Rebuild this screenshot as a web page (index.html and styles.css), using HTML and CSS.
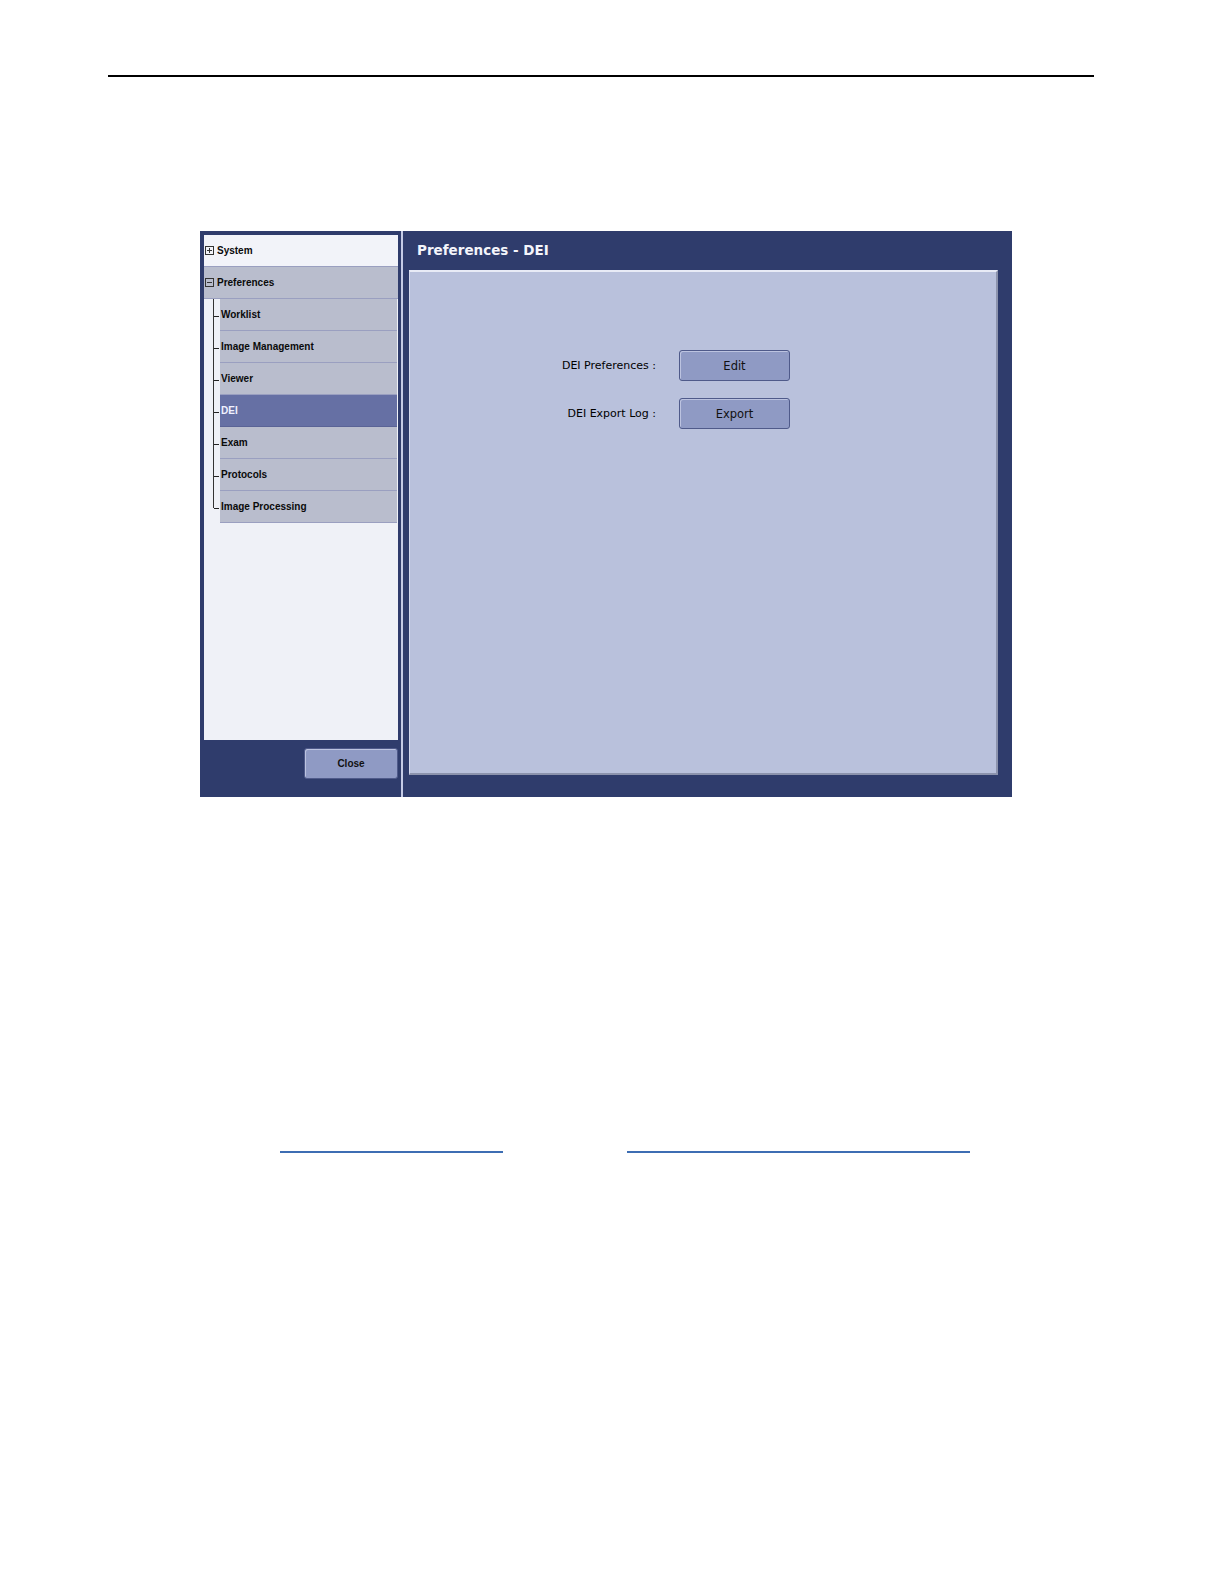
FILE: index.html
```html
<!DOCTYPE html>
<html>
<head>
<meta charset="utf-8">
<title>Preferences - DEI</title>
<link rel="stylesheet" href="styles.css">
</head>
<body>
<div class="page">
  <div class="rule"></div>
  <div class="shot">
    <div class="left">
      <div class="tree">
        <div class="row top first">
          <span class="box"><svg width="9" height="9" viewBox="0 0 9 9"><rect x="0.5" y="0.5" width="8" height="8" fill="none" stroke="#333" stroke-width="1"/><path d="M2 4.5H7M4.5 2V7" stroke="#333" stroke-width="1"/></svg></span>
          <span class="lbl">System</span>
        </div>
        <div class="row top">
          <span class="box"><svg width="9" height="9" viewBox="0 0 9 9"><rect x="0.5" y="0.5" width="8" height="8" fill="none" stroke="#333" stroke-width="1"/><path d="M2 4.5H7" stroke="#333" stroke-width="1"/></svg></span>
          <span class="lbl">Preferences</span>
        </div>
        <div class="children">
          <div class="child"><span class="tick"></span><span class="item">Worklist</span></div>
          <div class="child"><span class="tick"></span><span class="item">Image Management</span></div>
          <div class="child"><span class="tick"></span><span class="item">Viewer</span></div>
          <div class="child"><span class="tick"></span><span class="item sel">DEI</span></div>
          <div class="child"><span class="tick"></span><span class="item">Exam</span></div>
          <div class="child"><span class="tick"></span><span class="item">Protocols</span></div>
          <div class="child last"><span class="tick"></span><span class="item">Image Processing</span></div>
        </div>
      </div>
      <div class="foot">
        <button class="btn close">Close</button>
      </div>
    </div>
    <div class="sep"></div>
    <div class="right">
      <div class="title">Preferences - DEI</div>
      <div class="panel">
        <div class="form">
          <div class="frow"><span class="flabel">DEI Preferences :</span><button class="btn act">Edit</button></div>
          <div class="frow"><span class="flabel">DEI Export Log :</span><button class="btn act">Export</button></div>
        </div>
      </div>
    </div>
  </div>
  <div class="links">
    <span class="link l1"></span>
    <span class="link l2"></span>
  </div>
</div>
</body>
</html>
```
FILE: styles.css
```css
html, body {
  margin: 0;
  padding: 0;
  background: #ffffff;
}
.page {
  padding-top: 75px;
}
.rule {
  margin-left: 108px;
  width: 986px;
  height: 2px;
  background: #000;
}
.shot {
  margin-top: 154px;
  margin-left: 200px;
  width: 812px;
  height: 566px;
  background: #2f3c6c;
  display: flex;
}
.left {
  width: 201px;
  padding: 4px 3px 0 4px;
  box-sizing: border-box;
  display: flex;
  flex-direction: column;
}
.tree {
  height: 505px;
  background: #eff1f7;
  font-family: "Liberation Sans", Arial, sans-serif;
  font-weight: bold;
  font-size: 10px;
  color: #0a0a0a;
}
.row {
  height: 31px;
  border-bottom: 1px solid #9a9fc0;
  display: flex;
  align-items: center;
  padding-left: 1px;
  background: #b9bdcd;
}
.row.first {
  background: #f2f3f9;
}
.box {
  width: 9px;
  height: 9px;
  display: flex;
  margin-right: 3px;
}
.children {
  position: relative;
}
.children::before {
  content: "";
  position: absolute;
  left: 9px;
  top: 0;
  height: 209px;
  width: 1px;
  background: #333;
}
.child {
  display: flex;
  height: 32px;
  padding-left: 10px;
}
.tick {
  width: 5px;
  height: 1px;
  background: #222;
  align-self: center;
  margin-top: 2px;
  margin-right: 1px;
}
.item {
  flex: 1;
  margin-right: 1px;
  background: #b9bdcd;
  border-bottom: 1px solid #9a9fc0;
  display: flex;
  align-items: center;
  padding-left: 1px;
}
.item.sel {
  background: #6670a4;
  color: #f0f2ff;
  border-bottom-color: #5a6396;
}
.foot {
  display: flex;
  justify-content: flex-end;
  padding-top: 8px;
}
.btn {
  font-family: "DejaVu Sans", Verdana, sans-serif;
  background: #8f9ac4;
  border: 1px solid #4f5a8a;
  box-shadow: inset 1px 1px 0 #bcc3e0;
  border-radius: 3px;
  color: #111;
  padding: 0;
  margin: 0;
}
.close {
  width: 94px;
  height: 31px;
  font-family: "Liberation Sans", Arial, sans-serif;
  font-weight: bold;
  font-size: 10px;
  margin-right: 0;
}
.sep {
  width: 2px;
  background: #c5cbe6;
}
.right {
  flex: 1;
  display: flex;
  flex-direction: column;
}
.title {
  height: 39px;
  box-sizing: border-box;
  padding: 11px 0 0 14px;
  font-family: "DejaVu Sans", Verdana, sans-serif;
  font-weight: bold;
  font-size: 13.5px;
  color: #f4f5fb;
}
.panel {
  margin-left: 6px;
  width: 589px;
  height: 505px;
  box-sizing: border-box;
  background: #b9c1dc;
  border-top: 2px solid #e8ebf6;
  border-left: 1px solid #d5daee;
  border-right: 2px solid #8c93ad;
  border-bottom: 2px solid #8c93ad;
}
.form {
  padding-top: 78px;
  display: flex;
  flex-direction: column;
  gap: 17px;
}
.frow {
  display: flex;
  align-items: center;
}
.flabel {
  width: 246px;
  text-align: right;
  font-family: "DejaVu Sans", Verdana, sans-serif;
  font-size: 11px;
  color: #000;
  margin-right: 23px;
}
.act {
  width: 111px;
  height: 31px;
  font-size: 11.5px;
}
.links {
  margin-top: 354px;
  display: flex;
  height: 2px;
}
.link {
  height: 1.5px;
  background: #3d6db3;
}
.l1 {
  margin-left: 280px;
  width: 223px;
}
.l2 {
  margin-left: 124px;
  width: 343px;
}
```
